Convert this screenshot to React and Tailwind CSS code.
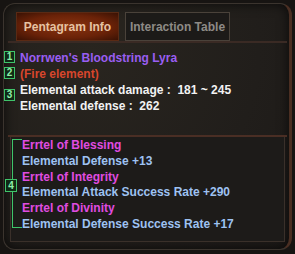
import React from 'react';

const Badge = ({ n, className }) => (
  <div className={`absolute w-[11px] h-[12px] border border-[#3fc46a] bg-[#0f2a16] text-[#8ef0a8] text-[10px] leading-[10px] font-bold flex items-center justify-center ${className}`}>
    {n}
  </div>
);

const App = () => {
  return (
    <div className="w-[295px] h-[254px] bg-[#171412] p-[3px] pb-[4px] relative" style={{ fontFamily: '"Liberation Sans", Arial, sans-serif' }}>
      {/* cadre */}
      <div className="h-full rounded-[12px] border border-[#3b342e] border-r-[3px] border-r-[#4a2e22] bg-[radial-gradient(ellipse_at_30%_20%,#29251f_0%,#211e1b_60%,#1c1917_100%)] shadow-[inset_0_0_12px_rgba(0,0,0,0.7)] flex flex-col pb-[7px]">
        {/* onglets */}
        <div className="flex gap-[6px] pl-[12px] pt-[8px]">
          <div className="w-[103px] h-[29px] border border-[#5a2a14] bg-[radial-gradient(ellipse_at_center,#8a3410_0%,#6a2208_60%,#3a1204_100%)] flex items-center justify-center text-[12px] font-bold text-[#e6c2a2]">
            Pentagram Info
          </div>
          <div className="w-[105px] h-[29px] border border-[#4a423a] bg-[#1c1a18] flex items-center justify-center text-[12px] font-bold text-[#8e8a86]">
            Interaction Table
          </div>
        </div>
        <div className="mx-[4px] mr-[2px] h-[2px] bg-[#3a2a24]"></div>

        {/* infos */}
        <div className="pl-[16px] pt-[7px] text-[12px] font-bold leading-[16px]">
          <div className="text-[#9a5ef2]">Norrwen's Bloodstring Lyra</div>
          <div className="text-[#d8462c]">(Fire element)</div>
          <div className="text-[#f2f2f2] whitespace-pre">Elemental attack damage :  181 ~ 245</div>
          <div className="text-[#f2f2f2] whitespace-pre">Elemental defense :  262</div>
        </div>

        {/* errtels */}
        <div className="mx-[4px] mr-[2px] mt-[21px] h-[2px] bg-[#4a2e24]"></div>
        <div className="mx-[6px] mr-[4px] flex-1 border-x border-b border-[#3a302a] bg-[#1d1b19] flex">
          <div className="ml-[1px] mt-[2px] mb-[13px] w-[10px] border-l border-y border-[#3fc46a]"></div>
          <div className="pt-[1px] text-[12px] font-bold leading-[15.8px]">
            <div className="text-[#e04ce0]">Errtel of Blessing</div>
            <div className="text-[#9ec2f2]">Elemental Defense +13</div>
            <div className="text-[#e04ce0]">Errtel of Integrity</div>
            <div className="text-[#9ec2f2]">Elemental Attack Success Rate +290</div>
            <div className="text-[#e04ce0]">Errtel of Divinity</div>
            <div className="text-[#9ec2f2]">Elemental Defense Success Rate +17</div>
          </div>
        </div>
      </div>

      <Badge n="1" className="left-[4px] top-[51px]" />
      <Badge n="2" className="left-[4px] top-[67px]" />
      <Badge n="3" className="left-[4px] top-[89px]" />
      <Badge n="4" className="left-[5px] top-[179px] w-[12px] h-[13px]" />
    </div>
  );
};

export default App;
